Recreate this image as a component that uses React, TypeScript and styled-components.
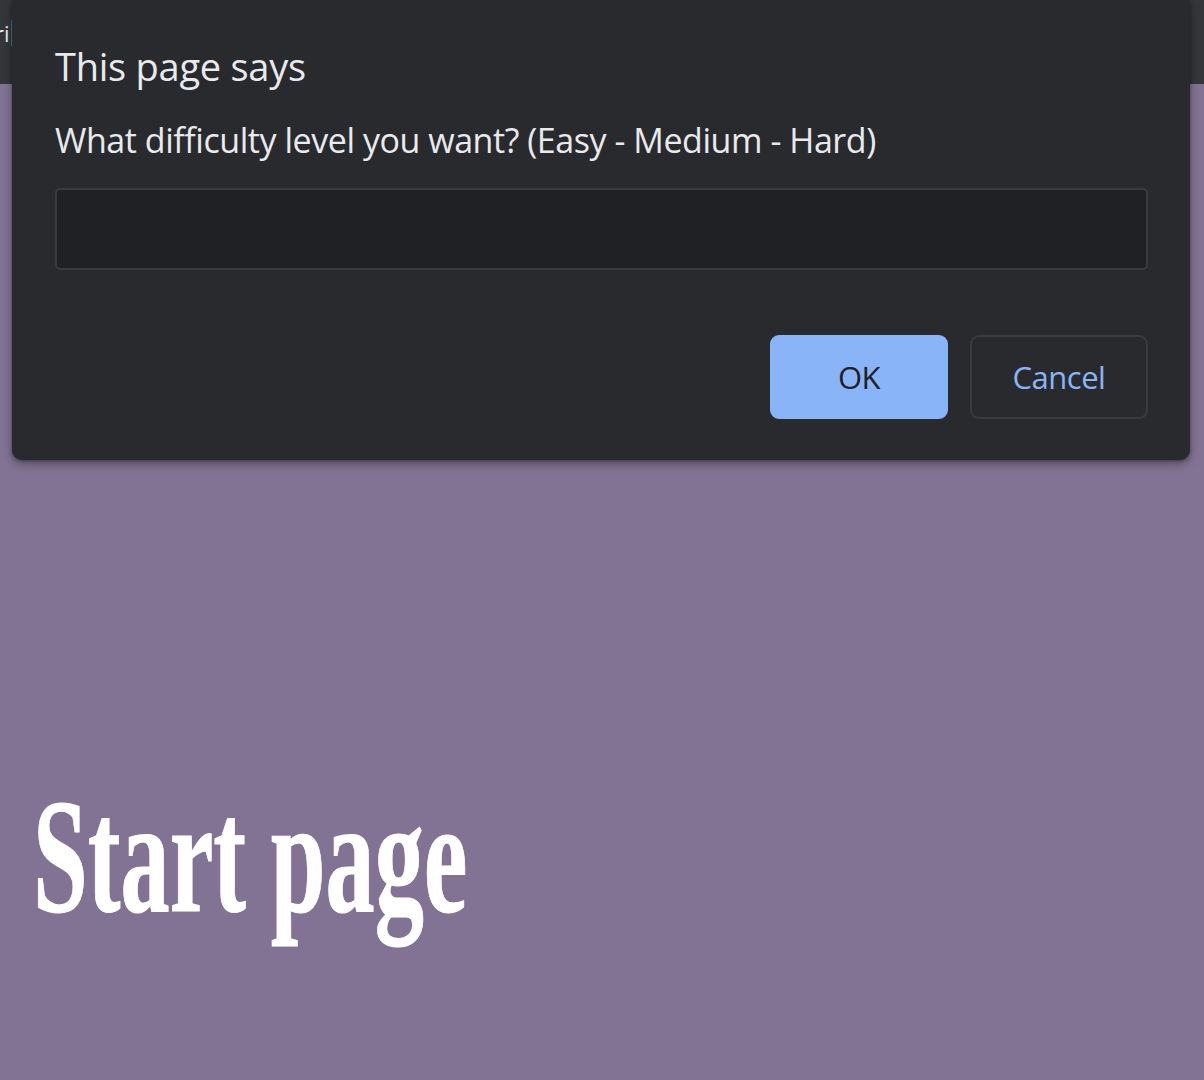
import React from "react";
import styled, { createGlobalStyle } from "styled-components";

const Global = createGlobalStyle`
  html, body { margin: 0; padding: 0; }
  body { background: #827395; font-family: "Open Sans", sans-serif; overflow: hidden; }
  #root { height: 1080px; }
`;

const Page = styled.div`
  position: relative;
  width: 1204px;
  height: 1080px;
  display: flex;
  flex-direction: column;
  background: #827395;
  overflow: hidden;
`;

const TopBar = styled.div`
  height: 84px;
  flex: none;
  background: #35363a;
  display: flex;
  align-items: flex-start;
  padding-top: 20px;
  box-sizing: border-box;
`;

const TabText = styled.span`
  color: #e8eaed;
  font-family: "Open Sans", sans-serif;
  font-size: 22px;
  line-height: 26px;
  margin-left: -5px;
  padding-right: 1px;
  border-right: 2px solid #2a8ca0;
`;

const Content = styled.main`
  flex: 1;
  display: flex;
  flex-direction: column;
  justify-content: flex-start;
  padding: 691px 0 0 33px;
`;

const Heading = styled.h1`
  margin: 0;
  color: #ffffff;
  font-family: "Liberation Serif", serif;
  font-weight: 700;
  font-size: 164px;
  line-height: 162px;
  white-space: nowrap;
  transform: scaleX(0.6);
  transform-origin: left center;
  -webkit-text-stroke: 1px #ffffff;
`;

const Dialog = styled.div`
  position: absolute;
  left: 12px;
  top: 0;
  width: 1178px;
  height: 460px;
  background: #292a2d;
  border-radius: 0 0 10px 10px;
  box-shadow: 0 4px 10px rgba(0, 0, 0, 0.35), 0 1px 3px rgba(0, 0, 0, 0.3);
  box-sizing: border-box;
  padding: 38px 42px 0 43px;
  display: flex;
  flex-direction: column;
`;

const Title = styled.div`
  color: #e8eaed;
  font-family: "Open Sans", sans-serif;
  font-size: 38px;
  line-height: 56px;
  letter-spacing: -0.25px;
`;

const Message = styled.div`
  color: #e8eaed;
  font-family: "Open Sans", sans-serif;
  font-size: 34px;
  line-height: 46px;
  margin-top: 23px;
  letter-spacing: -0.45px;
`;

const Input = styled.input`
  margin-top: 25px;
  height: 82px;
  box-sizing: border-box;
  background: #202124;
  border: 2px solid #3a3b3e;
  border-radius: 5px;
  outline: none;
  color: #e8eaed;
  font-size: 30px;
  padding: 0 16px;
`;

const Actions = styled.div`
  display: flex;
  justify-content: flex-end;
  gap: 22px;
  margin-top: 65px;
`;

const Button = styled.button<{ $primary?: boolean }>`
  width: 178px;
  height: 84px;
  box-sizing: border-box;
  border-radius: 9px;
  font-family: "Open Sans", sans-serif;
  font-size: 31px;
  font-weight: 500;
  letter-spacing: -0.5px;
  cursor: pointer;
  background: ${(p) => (p.$primary ? "#8ab4f8" : "transparent")};
  color: ${(p) => (p.$primary ? "#202124" : "#8ab4f8")};
  border: 2px solid ${(p) => (p.$primary ? "#8ab4f8" : "#3a3b3e")};
`;

export default function App() {
  return (
    <>
      <Global />
      <Page>
        <TopBar>
          <TabText>ri</TabText>
        </TopBar>
        <Content>
          <Heading>Start page</Heading>
        </Content>
        <Dialog>
          <Title>This page says</Title>
          <Message>What difficulty level you want? (Easy - Medium - Hard)</Message>
          <Input />
          <Actions>
            <Button $primary>OK</Button>
            <Button>Cancel</Button>
          </Actions>
        </Dialog>
      </Page>
    </>
  );
}
